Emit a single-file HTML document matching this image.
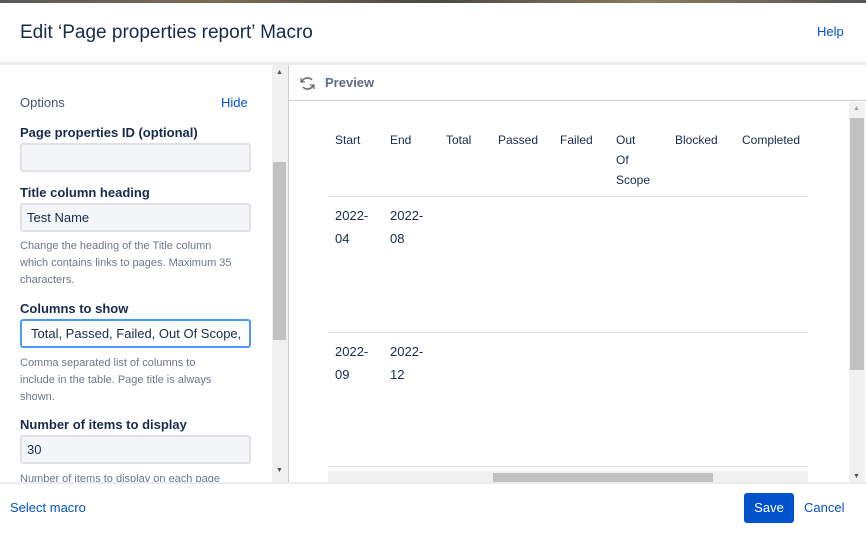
<!DOCTYPE html>
<html><head><style>
*{box-sizing:border-box;margin:0;padding:0}
body{width:866px;height:534px;position:relative;overflow:hidden;background:#fff;font-family:"Liberation Sans",sans-serif;color:#172b4d}
.a{position:absolute}
.lbl{font-size:13px;font-weight:bold;color:#172b4d;left:20px}
.inp{left:20px;width:231px;height:29px;background:#f4f5f7;border:2px solid #dfe1e6;border-radius:3px;font-size:13px;padding:5px 5px;color:#172b4d}
.hint{left:20px;width:250px;font-size:11px;color:#6b778c;line-height:17px;white-space:nowrap}
.th{font-size:12px;color:#172b4d;line-height:20px}
.td{font-size:13px;color:#172b4d;line-height:23px}
</style></head><body>
<div class="a" style="left:0;top:0;width:866px;height:3px;background:linear-gradient(90deg,#5a5a5a,#7a6a55,#4a4a44,#8a7a60,#555)"></div>
<div class="a" style="left:20px;top:22px;font-size:19px;color:#172b4d">Edit ‘Page properties report’ Macro</div>
<div class="a" style="left:817px;top:24px;font-size:13px;color:#0052cc">Help</div>
<div class="a" style="left:0;top:62px;width:866px;height:3px;background:#ebecf0"></div>

<div class="a" style="left:20px;top:95px;font-size:13px;color:#42526e">Options</div>
<div class="a" style="left:221px;top:95px;font-size:13px;color:#0052cc">Hide</div>
<div class="a lbl" style="top:125px">Page properties ID (optional)</div>
<div class="a inp" style="top:143px"></div>
<div class="a lbl" style="top:185px">Title column heading</div>
<div class="a inp" style="top:203px">Test Name</div>
<div class="a hint" style="top:238px">Change the heading of the Title column<br>which contains links to pages. Maximum 35<br>characters.</div>
<div class="a lbl" style="top:301px">Columns to show</div>
<div class="a inp" style="top:319px;background:#fff;border-color:#4c9aff;overflow:hidden;white-space:nowrap;padding-left:9px">Total, Passed, Failed, Out Of Scope,</div>
<div class="a hint" style="top:355px">Comma separated list of columns to<br>include in the table. Page title is always<br>shown.</div>
<div class="a lbl" style="top:417px">Number of items to display</div>
<div class="a inp" style="top:435px">30</div>
<div class="a hint" style="top:471px;height:12px;overflow:hidden">Number of items to display on each page</div>

<div class="a" style="left:272px;top:65px;width:16px;height:418px;background:#f0f0f0"></div>
<div class="a" style="left:273px;top:162px;width:13px;height:178px;background:#c1c1c1"></div>
<div class="a" style="left:276px;top:69px;font-size:7px;color:#505050">▲</div>
<div class="a" style="left:276px;top:467px;font-size:7px;color:#505050">▼</div>
<div class="a" style="left:288px;top:65px;width:1px;height:418px;background:#ccc"></div>

<svg class="a" style="left:299px;top:75px" width="17" height="17" viewBox="0 0 17 17" fill="none" stroke="#6b6b6b" stroke-width="1.6"><path d="M13 5A6 6 0 0 0 3 6.5"/><path d="M2 3v4h4" stroke-width="1.3"/><path d="M4 12a6 6 0 0 0 10-1.5"/><path d="M15 14v-4h-4" stroke-width="1.3"/></svg>
<div class="a" style="left:325px;top:75px;font-size:13px;font-weight:bold;color:#5e6c84">Preview</div>
<div class="a" style="left:289px;top:100px;width:577px;height:1px;background:#ccc"></div>

<div class="a th" style="left:335px;top:130px">Start</div>
<div class="a th" style="left:390px;top:130px">End</div>
<div class="a th" style="left:446px;top:130px">Total</div>
<div class="a th" style="left:498px;top:130px">Passed</div>
<div class="a th" style="left:560px;top:130px">Failed</div>
<div class="a th" style="left:616px;top:130px">Out<br>Of<br>Scope</div>
<div class="a th" style="left:675px;top:130px">Blocked</div>
<div class="a th" style="left:742px;top:130px">Completed</div>
<div class="a" style="left:328px;top:196px;width:480px;height:1px;background:#dfe1e6"></div>
<div class="a td" style="left:335px;top:204px">2022-<br>04</div>
<div class="a td" style="left:390px;top:204px">2022-<br>08</div>
<div class="a" style="left:328px;top:332px;width:480px;height:1px;background:#dfe1e6"></div>
<div class="a td" style="left:335px;top:340px">2022-<br>09</div>
<div class="a td" style="left:390px;top:340px">2022-<br>12</div>
<div class="a" style="left:328px;top:466px;width:480px;height:1px;background:#dfe1e6"></div>
<div class="a" style="left:328px;top:471px;width:480px;height:13px;background:#f0f0f0"></div>
<div class="a" style="left:493px;top:473px;width:220px;height:9px;background:#c1c1c1"></div>

<div class="a" style="left:849px;top:102px;width:16px;height:382px;background:#f0f0f0"></div>
<div class="a" style="left:850px;top:118px;width:14px;height:252px;background:#c1c1c1"></div>
<div class="a" style="left:853px;top:105px;font-size:7px;color:#a0a0a0">▲</div>
<div class="a" style="left:853px;top:473px;font-size:7px;color:#505050">▼</div>

<div class="a" style="left:0;top:482px;width:866px;height:2px;background:#ebecf0"></div>
<div class="a" style="left:10px;top:500px;font-size:13px;color:#0052cc">Select macro</div>
<div class="a" style="left:744px;top:493px;width:50px;height:30px;background:#0052cc;border-radius:3px;color:#fff;font-size:13px;text-align:center;line-height:30px">Save</div>
<div class="a" style="left:804px;top:500px;font-size:13px;color:#0052cc">Cancel</div>
</body></html>
